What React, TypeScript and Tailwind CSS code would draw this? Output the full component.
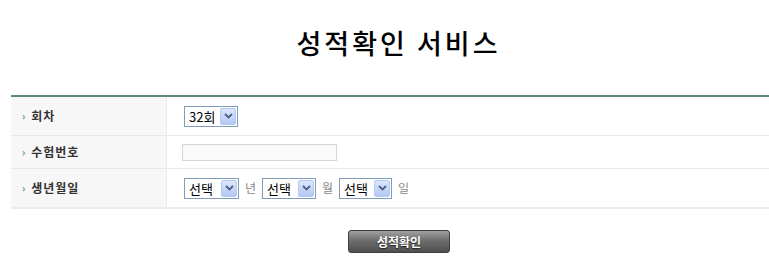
import React from 'react';

const font = { fontFamily: '"Noto Sans CJK KR", "Noto Sans", sans-serif' };

function FakeSelect({ value, width }: { value: string; width: string }) {
  return (
    <div className={`flex h-[21px] ${width} items-stretch border border-[#7f9db9] bg-white p-px`}>
      <span className="flex-1 pl-[3px] text-[13px] leading-[17px] text-black">{value}</span>
      <span className="flex w-[16px] items-center justify-center rounded-[2px] border border-[#b5c8f0] bg-gradient-to-b from-[#dce6fd] to-[#b4c8f6]">
        <svg width="9" height="6" viewBox="0 0 9 6">
          <path d="M1 1 L4.5 4.5 L8 1" fill="none" stroke="#4d6185" strokeWidth="1.8" />
        </svg>
      </span>
    </div>
  );
}

function Label({ text }: { text: string }) {
  return (
    <div className="flex w-[156px] shrink-0 items-center border-r border-[#e9e9e9] bg-[#f7f7f7] pl-[11px]">
      <span className="mr-[6px] text-[10px] font-bold leading-none text-[#4f8a72]">›</span>
      <span className="text-[12px] font-bold tracking-[1px] text-[#333]">{text}</span>
    </div>
  );
}

export default function App() {
  return (
    <div className="h-[268px] w-[769px] overflow-hidden bg-white" style={font}>
      <h1 className="pl-[28px] pt-[25px] text-center text-[27px] font-medium leading-[36px] tracking-[3px] text-black">
        성적확인 서비스
      </h1>

      <div className="ml-[11px] mt-[34px] border-t-2 border-[#5b8a7b] border-b-2 border-b-[#ececec]">
        {/* 회차 */}
        <div className="flex h-[39px] border-b border-[#e8e8e8]">
          <Label text="회차" />
          <div className="flex items-center pl-[17px]">
            <FakeSelect value="32회" width="w-[54px]" />
          </div>
        </div>

        {/* 수험번호 */}
        <div className="flex h-[33px] border-b border-[#e8e8e8]">
          <Label text="수험번호" />
          <div className="flex items-center pl-[15px]">
            <input
              type="text"
              className="h-[17px] w-[155px] border border-[#d6d6d6] bg-[#fafafa] outline-none"
            />
          </div>
        </div>

        {/* 생년월일 */}
        <div className="flex h-[38px]">
          <Label text="생년월일" />
          <div className="flex items-center pl-[17px] text-[12px] text-[#888]">
            <FakeSelect value="선택" width="w-[55px]" />
            <span className="mx-[6px]">년</span>
            <FakeSelect value="선택" width="w-[54px]" />
            <span className="mx-[6px]">월</span>
            <FakeSelect value="선택" width="w-[53px]" />
            <span className="ml-[6px]">일</span>
          </div>
        </div>
      </div>

      <div className="mt-[21px] flex justify-center pl-[29px]">
        <button className="h-[23px] w-[102px] rounded-[3px] border border-[#3d3d3d] bg-gradient-to-b from-[#a0a0a0] via-[#6a6a6a] to-[#505050] text-[12px] font-bold text-white [text-shadow:0_1px_1px_#222]">
          성적확인
        </button>
      </div>
    </div>
  );
}
